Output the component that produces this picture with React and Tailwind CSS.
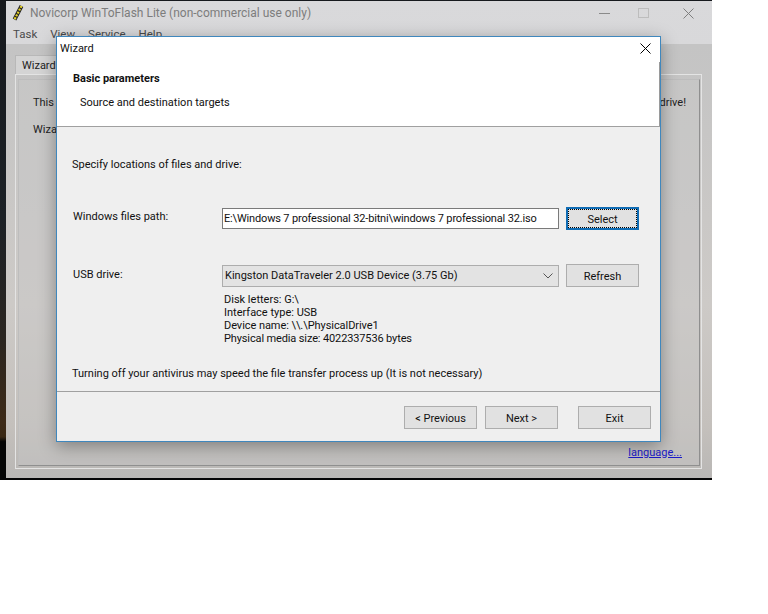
const Btn = ({ children, className = '' }) => (
  <button className={`w-[73px] h-[23px] pt-[3px] flex items-center justify-center bg-[#e1e1e1] border border-[#adadad] text-[#111] ${className}`}>
    {children}
  </button>
);

const Wizard = () => (
  <div className="absolute left-[56px] top-[36px] w-[605px] h-[406px] flex flex-col bg-[#efefef] border border-[#3f87bd] shadow-[0_4px_16px_rgba(0,0,0,0.35)] text-[#111]">
    <div className="h-[90px] bg-white border-b border-[#a0a0a0] relative">
      <div className="pl-[3px] pt-[4px] leading-[16px]">Wizard</div>
      <div className="pl-[16px] pt-[14px] leading-[16px] font-bold">Basic parameters</div>
      <div className="pl-[23px] pt-[8px] leading-[16px]">Source and destination targets</div>
      <svg className="absolute right-[9px] top-[6px]" width="11" height="11" viewBox="0 0 11 11" fill="none" stroke="#000" strokeWidth="1">
        <path d="M0.5 0.5l10 10M10.5 0.5l-10 10" />
      </svg>
      <div className="absolute right-0 top-[25px] bottom-0 w-px bg-[#9a9a9a]" />
    </div>
    <div className="flex-1 flex flex-col pl-[15px] pr-[21px]">
      <div className="pt-[30px] leading-[16px]">Specify locations of files and drive:</div>
      <div className="flex mt-[34px] h-[23px]">
        <div className="w-[150px] pl-[1px] leading-[16px] pt-[2px]">Windows files path:</div>
        <div className="w-[337px] h-[21px] mt-px bg-white border border-[#7a7a7a] pl-px leading-[19px] tracking-[-0.16px] whitespace-nowrap overflow-hidden">E:\Windows 7 professional 32-bitni\windows 7 professional 32.iso</div>
        <Btn className="ml-[7px] border-2 !border-[#0f6cb4] outline-1 outline-dotted outline-offset-[-3px] outline-black">Select</Btn>
      </div>
      <div className="flex mt-[34px]">
        <div className="w-[150px] pl-[1px] leading-[16px] pt-[3px]">USB drive:</div>
        <div className="w-[337px] h-[22px] mt-px bg-[#e3e3e3] border border-[#adadad] pl-[2px] pr-[5px] flex items-center justify-between">
          <span className="pt-px whitespace-nowrap">Kingston DataTraveler 2.0 USB Device (3.75 Gb)</span>
          <svg width="10" height="6" viewBox="0 0 10 6" fill="none" stroke="#555" strokeWidth="1"><path d="M0.5 0.5l4.5 4.5l4.5-4.5" /></svg>
        </div>
        <Btn className="ml-[7px]">Refresh</Btn>
      </div>
      <div className="pl-[152px] mt-[6px] leading-[13px]">
        <div>Disk letters: G:\</div>
        <div>Interface type: USB</div>
        <div className="tracking-[-0.06px]">Device name: \\.\PhysicalDrive1</div>
        <div className="tracking-[-0.13px]">Physical media size: 4022337536 bytes</div>
      </div>
      <div className="mt-[21px] leading-[16px]">Turning off your antivirus may speed the file transfer process up (It is not necessary)</div>
    </div>
    <div className="h-[50px] border-t border-[#a0a0a0] flex justify-end items-start pt-[14px] pr-[9px]">
      <Btn>&lt; Previous</Btn>
      <Btn className="ml-[8px]">Next &gt;</Btn>
      <Btn className="ml-[20px]">Exit</Btn>
    </div>
  </div>
);

const App = () => {
  return (
    <div className="w-[768px] h-[614px] bg-white text-[11px] font-['Roboto',sans-serif]">
      <div className="relative w-[712px] h-[480px] pl-[6px] pb-[2px] pt-[1px] bg-[linear-gradient(#16191d,#1c2126_45%,#2a2520_70%,#3d2a17_88%,#3a2814_91%,#050505_92%)] overflow-hidden">
        <div className="h-full flex flex-col text-[#333] bg-gradient-to-b from-[#d9d9db] to-[#cfcfd0]">
          <div className="h-[24px] flex items-center pl-[6px] relative text-[#7d7d7d]">
            <svg width="12" height="16" viewBox="0 0 12 16" fill="none">
              <path d="M9.5 1L2.5 14.5" stroke="#222" strokeWidth="4" />
              <path d="M9.5 1L2.5 14.5" stroke="#e5d22a" strokeWidth="2.2" strokeDasharray="2 1.2" />
            </svg>
            <span className="ml-[6px] text-[12px] whitespace-nowrap">Novicorp WinToFlash Lite (non-commercial use only)</span>
            <svg className="absolute left-[593px] top-[12px]" width="11" height="1"><path d="M0 0.5h11" stroke="#8a8a8a" /></svg>
            <div className="absolute left-[632px] top-[7px] w-[11px] h-[10px] border border-[#bdbdbd]" />
            <svg className="absolute left-[677px] top-[7px]" width="11" height="11" viewBox="0 0 11 11" fill="none" stroke="#7e7e7e"><path d="M0.5 0.5l10 10M10.5 0.5l-10 10" /></svg>
          </div>
          <div className="h-[19px] flex items-center pl-[7px] gap-[13px] text-[11.5px] text-[#4a4a4a] whitespace-nowrap">
            <span>Task</span><span>View</span><span>Service</span><span>Help</span>
          </div>
          <div className="flex-1 bg-[linear-gradient(#c4c4c4,#cdcac7_60%,#c4c0bc_88%,#b9b7b5)] pl-[9px] pr-[10px] pt-[11px] pb-[9px] flex flex-col">
            <div className="w-[48px] h-[20px] pl-[6px] pt-[1px] leading-[18px] bg-[#d4d4d4] border border-b-0 border-[#b8b8b8] text-[#222]">Wizard</div>
            <div className="flex-1 border border-[#e4e4e4] pl-[2px] pr-px pb-[2px] pt-[4px] -mt-px">
              <div className="relative h-full border border-[#8f8f8f] border-t-[#bdbdbd] border-l-[#bdbdbd] bg-[#c9c9c9]/40 text-[#222]">
                <div className="absolute left-[14px] top-[15px]">This</div>
                <div className="absolute left-[14px] top-[42px]">Wiza</div>
                <div className="absolute right-[13px] top-[15px]">drive!</div>
                <a className="absolute right-[17px] bottom-[4px] underline text-[#1a1ac8]">language...</a>
              </div>
            </div>
          </div>
        </div>
        <Wizard />
      </div>
    </div>
  );
};

export default App;
